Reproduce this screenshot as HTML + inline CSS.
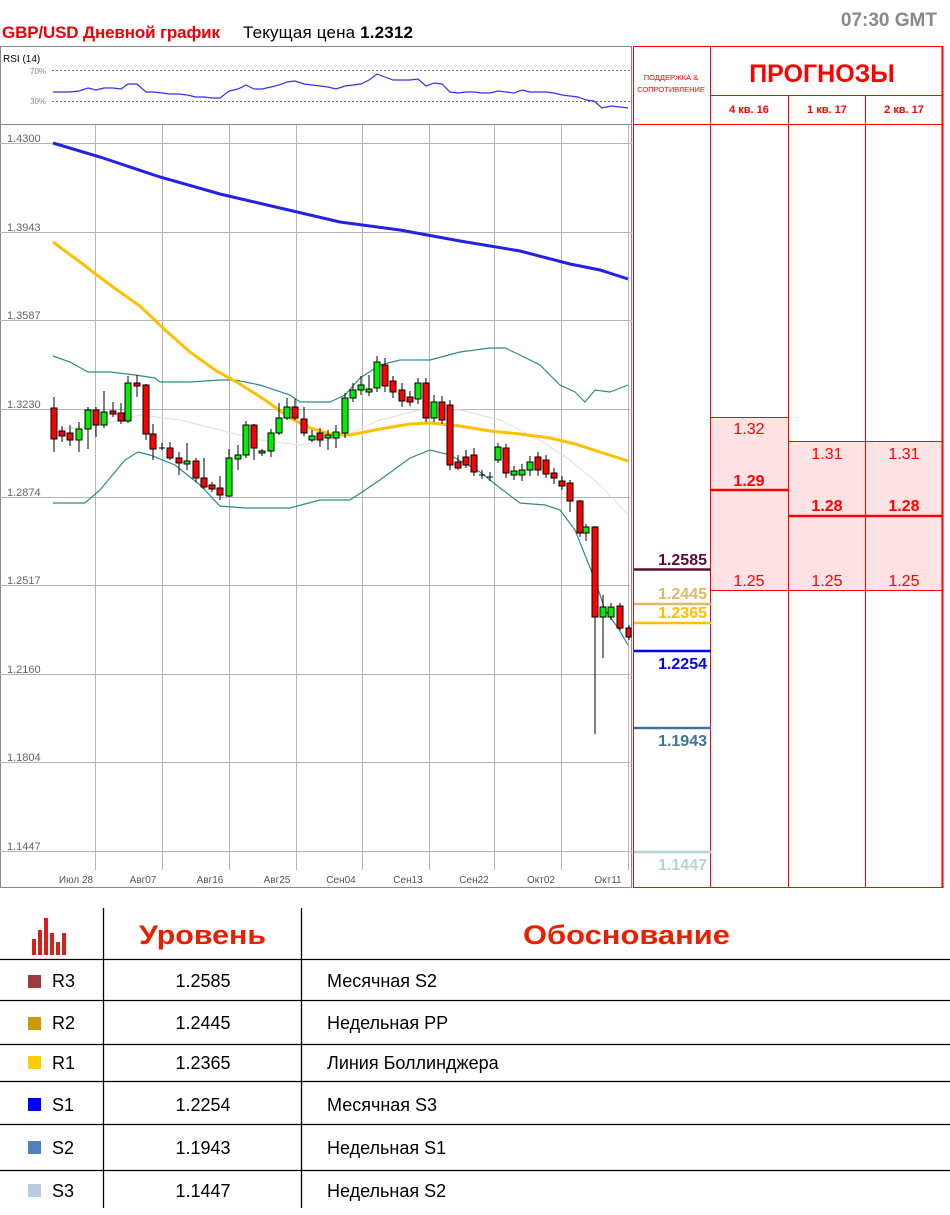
<!DOCTYPE html>
<html><head><meta charset="utf-8"><style>
html,body{margin:0;padding:0;background:#fff;width:950px;height:1215px;overflow:hidden}
svg{display:block}
text{font-family:"Liberation Sans","DejaVu Sans",sans-serif}
</style></head><body>
<svg width="950" height="1215" viewBox="0 0 950 1215" xmlns="http://www.w3.org/2000/svg">
<!-- header -->
<text x="2" y="38" font-size="17" font-weight="bold" fill="#e8000b" textLength="218">GBP/USD Дневной график</text>
<text x="243" y="38" font-size="17" fill="#000" textLength="170">Текущая цена <tspan font-weight="bold">1.2312</tspan></text>
<text x="937" y="26" font-size="19" font-weight="bold" fill="#8a8a8a" text-anchor="end">07:30 GMT</text>

<!-- chart frame -->
<rect x="0.5" y="46.5" width="631" height="841" fill="none" stroke="#888" stroke-width="1"/>
<line x1="0" y1="124.5" x2="632" y2="124.5" stroke="#888"/>
<!-- RSI -->
<text x="3" y="62" font-size="10" fill="#000">RSI (14)</text>
<text x="30" y="74" font-size="8" fill="#888">70%</text>
<text x="30" y="104" font-size="8" fill="#888">30%</text>
<line x1="52" y1="70.5" x2="630" y2="70.5" stroke="#777" stroke-dasharray="2,2"/>
<line x1="52" y1="101.5" x2="630" y2="101.5" stroke="#777" stroke-dasharray="2,2"/>
<polyline fill="none" stroke="#3333ee" stroke-width="1.2" points="53,92 62,92 70,92 79,91 88,88 96,90 104,88 113,88 121,89 128,84 137,84 146,92 153,92 162,93 170,94 179,94 187,95 196,97 204,97 212,98 220,98 229,91 238,89 246,85 254,89 262,89 271,87 279,85 287,82 295,81 304,84 312,85 320,86 328,87 336,89 345,86 353,85 361,84 369,80 377,74 385,77 393,80 402,80 410,80 418,79 426,86 434,83 442,84 450,92 458,93 466,92 474,92 482,93 490,93 498,91 506,92 514,93 522,90 530,92 538,92 546,92 554,93 562,95 570,96 578,97 586,100 594,101 602,108 611,106 620,107 628,108"/>

<!-- grid -->
<g stroke="#b5b5b5" stroke-width="1">
<line x1="0" y1="143.5" x2="632" y2="143.5"/>
<line x1="0" y1="232.5" x2="632" y2="232.5"/>
<line x1="0" y1="320.5" x2="632" y2="320.5"/>
<line x1="0" y1="409.5" x2="632" y2="409.5"/>
<line x1="0" y1="497.5" x2="632" y2="497.5"/>
<line x1="0" y1="585.5" x2="632" y2="585.5"/>
<line x1="0" y1="674.5" x2="632" y2="674.5"/>
<line x1="0" y1="762.5" x2="632" y2="762.5"/>
<line x1="0" y1="851.5" x2="632" y2="851.5"/>
<line x1="95.5" y1="125" x2="95.5" y2="870"/>
<line x1="162.5" y1="125" x2="162.5" y2="870"/>
<line x1="229.5" y1="125" x2="229.5" y2="870"/>
<line x1="296.5" y1="125" x2="296.5" y2="870"/>
<line x1="362.5" y1="125" x2="362.5" y2="870"/>
<line x1="429.5" y1="125" x2="429.5" y2="870"/>
<line x1="494.5" y1="125" x2="494.5" y2="870"/>
<line x1="561.5" y1="125" x2="561.5" y2="870"/>
<line x1="628.5" y1="125" x2="628.5" y2="870"/>
</g>
<g font-size="11" fill="#666">
<text x="7" y="142">1.4300</text>
<text x="7" y="231">1.3943</text>
<text x="7" y="319">1.3587</text>
<text x="7" y="408">1.3230</text>
<text x="7" y="496">1.2874</text>
<text x="7" y="584">1.2517</text>
<text x="7" y="673">1.2160</text>
<text x="7" y="761">1.1804</text>
<text x="7" y="850">1.1447</text>
</g>
<g font-size="10" fill="#555" text-anchor="middle">
<text x="76" y="883">Июл 28</text><text x="143" y="883">Авг07</text><text x="210" y="883">Авг16</text><text x="277" y="883">Авг25</text><text x="341" y="883">Сен04</text><text x="408" y="883">Сен13</text><text x="474" y="883">Сен22</text><text x="541" y="883">Окт02</text><text x="608" y="883">Окт11</text>
</g>

<!-- bollinger mid -->
<polyline fill="none" stroke="#e4e4e4" stroke-width="1.2" points="53,430 100,425 140,415 180,420 220,430 260,440 300,445 340,438 380,420 420,410 460,410 500,420 540,440 570,460 600,485 628,515"/>
<!-- bollinger upper/lower -->
<polyline fill="none" stroke="#2e8b8b" stroke-width="1.2" points="53,356 70,362 88,372 110,372 135,375 155,378 160,382 190,382 220,380 235,380 260,385 290,395 300,402 330,402 345,395 360,378 380,365 400,360 430,360 460,352 490,348 505,348 520,355 540,365 560,385 575,392 585,402 595,390 610,392 628,385"/>
<polyline fill="none" stroke="#2e8b8b" stroke-width="1.2" points="53,503 85,503 100,490 125,460 138,452 150,455 175,465 200,485 220,506 245,508 290,508 320,500 350,500 380,480 410,458 430,450 450,455 480,472 500,488 520,503 545,505 560,510 575,530 585,555 595,580 605,610 618,628 628,645"/>
<!-- MAs -->
<polyline fill="none" stroke="#2222e0" stroke-width="3" points="53,143 100,157 160,177 220,194 280,208 340,222 400,230 460,241 520,251 570,264 600,270 628,279"/>
<polyline fill="none" stroke="#ffc000" stroke-width="3" points="53,242 80,262 110,285 140,306 165,330 190,352 215,370 240,384 265,400 290,418 310,428 330,434 350,435 380,429 410,424 430,423 460,426 490,431 520,434 550,438 575,444 600,452 628,461"/>

<!-- candles -->
<g stroke="#000" stroke-width="1">
<line x1="54" y1="397" x2="54" y2="452"/><rect x="51" y="408" width="6" height="31" fill="#f00"/>
<line x1="62" y1="426" x2="62" y2="442"/><rect x="59" y="431" width="6" height="5" fill="#f00"/>
<line x1="70" y1="425" x2="70" y2="446"/><rect x="67" y="433" width="6" height="7" fill="#f00"/>
<line x1="79" y1="422" x2="79" y2="452"/><rect x="76" y="429" width="6" height="11" fill="#0e0"/>
<line x1="88" y1="407" x2="88" y2="449"/><rect x="85" y="410" width="6" height="19" fill="#0e0"/>
<line x1="96" y1="407" x2="96" y2="437"/><rect x="93" y="410" width="6" height="15" fill="#f00"/>
<line x1="104" y1="391" x2="104" y2="428"/><rect x="101" y="412" width="6" height="13" fill="#0e0"/>
<line x1="113" y1="402" x2="113" y2="417"/><rect x="110" y="411" width="6" height="3" fill="#f00"/>
<line x1="121" y1="403" x2="121" y2="424"/><rect x="118" y="413" width="6" height="8" fill="#f00"/>
<line x1="128" y1="376" x2="128" y2="423"/><rect x="125" y="383" width="6" height="38" fill="#0e0"/>
<line x1="137" y1="375" x2="137" y2="397"/><rect x="134" y="383" width="6" height="3" fill="#f00"/>
<line x1="146" y1="384" x2="146" y2="440"/><rect x="143" y="385" width="6" height="49" fill="#f00"/>
<line x1="153" y1="424" x2="153" y2="460"/><rect x="150" y="434" width="6" height="15" fill="#f00"/>
<line x1="162" y1="443" x2="162" y2="450"/><line x1="159" y1="448" x2="165" y2="448"/>
<line x1="170" y1="442" x2="170" y2="460"/><rect x="167" y="448" width="6" height="10" fill="#f00"/>
<line x1="179" y1="452" x2="179" y2="475"/><rect x="176" y="458" width="6" height="5" fill="#f00"/>
<line x1="187" y1="443" x2="187" y2="470"/><rect x="184" y="461" width="6" height="3" fill="#0e0"/>
<line x1="196" y1="458" x2="196" y2="482"/><rect x="193" y="461" width="6" height="17" fill="#f00"/>
<line x1="204" y1="458" x2="204" y2="489"/><rect x="201" y="478" width="6" height="9" fill="#f00"/>
<line x1="212" y1="482" x2="212" y2="492"/><rect x="209" y="485" width="6" height="4" fill="#f00"/>
<line x1="220" y1="476" x2="220" y2="500"/><rect x="217" y="488" width="6" height="7" fill="#f00"/>
<line x1="229" y1="449" x2="229" y2="497"/><rect x="226" y="458" width="6" height="38" fill="#0e0"/>
<line x1="238" y1="445" x2="238" y2="470"/><rect x="235" y="455" width="6" height="4" fill="#0e0"/>
<line x1="246" y1="421" x2="246" y2="458"/><rect x="243" y="425" width="6" height="30" fill="#0e0"/>
<line x1="254" y1="424" x2="254" y2="460"/><rect x="251" y="425" width="6" height="23" fill="#f00"/>
<line x1="262" y1="449" x2="262" y2="456"/><rect x="259" y="451" width="6" height="2" fill="#0e0"/>
<line x1="271" y1="429" x2="271" y2="457"/><rect x="268" y="433" width="6" height="18" fill="#0e0"/>
<line x1="279" y1="403" x2="279" y2="435"/><rect x="276" y="418" width="6" height="15" fill="#0e0"/>
<line x1="287" y1="398" x2="287" y2="420"/><rect x="284" y="407" width="6" height="11" fill="#0e0"/>
<line x1="295" y1="399" x2="295" y2="420"/><rect x="292" y="407" width="6" height="11" fill="#f00"/>
<line x1="304" y1="407" x2="304" y2="436"/><rect x="301" y="419" width="6" height="14" fill="#f00"/>
<line x1="312" y1="430" x2="312" y2="442"/><rect x="309" y="436" width="6" height="4" fill="#0e0"/>
<line x1="320" y1="428" x2="320" y2="447"/><rect x="317" y="433" width="6" height="7" fill="#f00"/>
<line x1="328" y1="430" x2="328" y2="450"/><rect x="325" y="435" width="6" height="3" fill="#0e0"/>
<line x1="336" y1="425" x2="336" y2="448"/><rect x="333" y="432" width="6" height="6" fill="#0e0"/>
<line x1="345" y1="393" x2="345" y2="438"/><rect x="342" y="398" width="6" height="35" fill="#0e0"/>
<line x1="353" y1="383" x2="353" y2="402"/><rect x="350" y="390" width="6" height="8" fill="#0e0"/>
<line x1="361" y1="376" x2="361" y2="395"/><rect x="358" y="385" width="6" height="5" fill="#0e0"/>
<line x1="369" y1="375" x2="369" y2="396"/><rect x="366" y="389" width="6" height="3" fill="#0e0"/>
<line x1="377" y1="356" x2="377" y2="392"/><rect x="374" y="362" width="6" height="26" fill="#0e0"/>
<line x1="385" y1="358" x2="385" y2="392"/><rect x="382" y="365" width="6" height="21" fill="#f00"/>
<line x1="393" y1="376" x2="393" y2="398"/><rect x="390" y="381" width="6" height="11" fill="#f00"/>
<line x1="402" y1="383" x2="402" y2="407"/><rect x="399" y="390" width="6" height="11" fill="#f00"/>
<line x1="410" y1="391" x2="410" y2="406"/><rect x="407" y="397" width="6" height="5" fill="#f00"/>
<line x1="418" y1="378" x2="418" y2="404"/><rect x="415" y="383" width="6" height="16" fill="#0e0"/>
<line x1="426" y1="378" x2="426" y2="422"/><rect x="423" y="383" width="6" height="35" fill="#f00"/>
<line x1="434" y1="395" x2="434" y2="422"/><rect x="431" y="402" width="6" height="16" fill="#0e0"/>
<line x1="442" y1="396" x2="442" y2="424"/><rect x="439" y="402" width="6" height="18" fill="#f00"/>
<line x1="450" y1="400" x2="450" y2="470"/><rect x="447" y="405" width="6" height="60" fill="#f00"/>
<line x1="458" y1="455" x2="458" y2="470"/><rect x="455" y="462" width="6" height="6" fill="#f00"/>
<line x1="466" y1="450" x2="466" y2="468"/><rect x="463" y="457" width="6" height="8" fill="#f00"/>
<line x1="474" y1="448" x2="474" y2="476"/><rect x="471" y="455" width="6" height="17" fill="#f00"/>
<line x1="482" y1="470" x2="482" y2="479"/><line x1="479" y1="475" x2="485" y2="475"/>
<line x1="490" y1="472" x2="490" y2="481"/><line x1="487" y1="477" x2="493" y2="477"/>
<line x1="498" y1="443" x2="498" y2="463"/><rect x="495" y="447" width="6" height="13" fill="#0e0"/>
<line x1="506" y1="444" x2="506" y2="478"/><rect x="503" y="448" width="6" height="25" fill="#f00"/>
<line x1="514" y1="466" x2="514" y2="480"/><rect x="511" y="471" width="6" height="4" fill="#0e0"/>
<line x1="522" y1="464" x2="522" y2="481"/><rect x="519" y="470" width="6" height="5" fill="#0e0"/>
<line x1="530" y1="456" x2="530" y2="476"/><rect x="527" y="462" width="6" height="8" fill="#0e0"/>
<line x1="538" y1="452" x2="538" y2="476"/><rect x="535" y="457" width="6" height="13" fill="#f00"/>
<line x1="546" y1="455" x2="546" y2="478"/><rect x="543" y="460" width="6" height="14" fill="#f00"/>
<line x1="554" y1="468" x2="554" y2="484"/><rect x="551" y="473" width="6" height="5" fill="#f00"/>
<line x1="562" y1="476" x2="562" y2="490"/><rect x="559" y="481" width="6" height="5" fill="#f00"/>
<line x1="570" y1="480" x2="570" y2="512"/><rect x="567" y="483" width="6" height="18" fill="#f00"/>
<line x1="580" y1="500" x2="580" y2="537"/><rect x="577" y="501" width="6" height="32" fill="#f00"/>
<line x1="586" y1="524" x2="586" y2="541"/><rect x="583" y="527" width="6" height="6" fill="#0e0"/>
<line x1="595" y1="526" x2="595" y2="734"/><rect x="592" y="527" width="6" height="90" fill="#f00"/>
<line x1="603" y1="595" x2="603" y2="658"/><rect x="600" y="607" width="6" height="10" fill="#0e0"/>
<line x1="611" y1="603" x2="611" y2="620"/><rect x="608" y="607" width="6" height="10" fill="#0e0"/>
<line x1="620" y1="603" x2="620" y2="630"/><rect x="617" y="606" width="6" height="22" fill="#f00"/>
<line x1="629" y1="625" x2="629" y2="640"/><rect x="626" y="628" width="5" height="9" fill="#f00"/>
</g>

<!-- right panel -->
<rect x="711" y="417" width="77" height="173" fill="#fde3e3"/>
<rect x="788" y="441" width="154" height="149" fill="#fde3e3"/>
<g stroke="#f00" stroke-width="1" fill="none">
<rect x="633.5" y="46.5" width="309" height="841"/>
<line x1="710.5" y1="46" x2="710.5" y2="888"/>
<line x1="788.5" y1="95" x2="788.5" y2="888"/>
<line x1="865.5" y1="95" x2="865.5" y2="888"/>
<line x1="710" y1="95.5" x2="943" y2="95.5"/>
<line x1="633" y1="124.5" x2="943" y2="124.5"/>
<line x1="710" y1="417.5" x2="788" y2="417.5"/>
<line x1="788" y1="441.5" x2="943" y2="441.5"/>
<line x1="710" y1="590.5" x2="943" y2="590.5"/>
</g>
<line x1="942.5" y1="46" x2="942.5" y2="888" stroke="#f00" stroke-width="2"/>
<line x1="711" y1="490" x2="788" y2="490" stroke="#f00" stroke-width="2.5"/>
<line x1="788" y1="516" x2="943" y2="516" stroke="#f00" stroke-width="2.5"/>
<text x="671" y="80" font-size="7.5" fill="#f00" text-anchor="middle">ПОДДЕРЖКА &amp;</text>
<text x="671" y="92" font-size="7.5" fill="#f00" text-anchor="middle">СОПРОТИВЛЕНИЕ</text>
<text x="822" y="82" font-size="25" font-weight="bold" fill="#f00" text-anchor="middle">ПРОГНОЗЫ</text>
<g font-size="11" font-weight="bold" fill="#f00" text-anchor="middle">
<text x="749" y="113">4 кв. 16</text><text x="827" y="113">1 кв. 17</text><text x="904" y="113">2 кв. 17</text>
</g>
<g font-size="16" fill="#f00" text-anchor="middle">
<text x="749" y="434">1.32</text><text x="827" y="459">1.31</text><text x="904" y="459">1.31</text>
<text x="749" y="586">1.25</text><text x="827" y="586">1.25</text><text x="904" y="586">1.25</text>
</g>
<g font-size="16" font-weight="bold" fill="#f00" text-anchor="middle">
<text x="749" y="486">1.29</text><text x="827" y="511">1.28</text><text x="904" y="511">1.28</text>
</g>
<!-- level lines -->
<line x1="634" y1="569.5" x2="711" y2="569.5" stroke="#5e0a35" stroke-width="2.5"/>
<line x1="634" y1="604" x2="711" y2="604" stroke="#d9b96b" stroke-width="2.5"/>
<line x1="634" y1="623" x2="711" y2="623" stroke="#ffc000" stroke-width="2.5"/>
<line x1="634" y1="651" x2="711" y2="651" stroke="#0000ff" stroke-width="2.5"/>
<line x1="634" y1="728" x2="711" y2="728" stroke="#3f7496" stroke-width="2.5"/>
<line x1="634" y1="852" x2="711" y2="852" stroke="#b5d5d5" stroke-width="2.5"/>
<g font-size="16" font-weight="bold" text-anchor="end">
<text x="707" y="565" fill="#5e0a35">1.2585</text>
<text x="707" y="599" fill="#d9b96b">1.2445</text>
<text x="707" y="618" fill="#ffc000">1.2365</text>
<text x="707" y="669" fill="#0000ff">1.2254</text>
<text x="707" y="746" fill="#3f7496">1.1943</text>
<text x="707" y="870" fill="#b5d5d5">1.1447</text>
</g>

<!-- bottom table -->
<g fill="#d8201a">
<rect x="32" y="939" width="4" height="16"/><rect x="38" y="930" width="4" height="25"/><rect x="44" y="918" width="4" height="37"/><rect x="50" y="933" width="4" height="22"/><rect x="56" y="942" width="4" height="13"/><rect x="62" y="933" width="4" height="22"/>
</g>
<text x="139" y="944" font-size="27" font-weight="bold" fill="#e82000" textLength="127" lengthAdjust="spacingAndGlyphs">Уровень</text>
<text x="523" y="944" font-size="27" font-weight="bold" fill="#e82000" textLength="207" lengthAdjust="spacingAndGlyphs">Обоснование</text>
<g stroke="#000" stroke-width="1.3">
<line x1="103.5" y1="908" x2="103.5" y2="1208"/>
<line x1="301.5" y1="908" x2="301.5" y2="1208"/>
<line x1="0" y1="959.5" x2="950" y2="959.5"/>
<line x1="0" y1="1000.5" x2="950" y2="1000.5"/>
<line x1="0" y1="1044.5" x2="950" y2="1044.5"/>
<line x1="0" y1="1081.5" x2="950" y2="1081.5"/>
<line x1="0" y1="1124.5" x2="950" y2="1124.5"/>
<line x1="0" y1="1170.5" x2="950" y2="1170.5"/>
</g>
<rect x="28" y="975" width="13" height="13" fill="#9b3c3c"/>
<rect x="28" y="1017" width="13" height="13" fill="#cc9900"/>
<rect x="28" y="1056" width="13" height="13" fill="#ffcc00"/>
<rect x="28" y="1098" width="13" height="13" fill="#0000ff"/>
<rect x="28" y="1141" width="13" height="13" fill="#4f81bd"/>
<rect x="28" y="1184" width="13" height="13" fill="#b8cce4"/>
<g font-size="18" fill="#000">
<text x="52" y="987">R3</text><text x="52" y="1029">R2</text><text x="52" y="1069">R1</text><text x="52" y="1111">S1</text><text x="52" y="1154">S2</text><text x="52" y="1197">S3</text>
</g>
<g font-size="18" fill="#000" text-anchor="middle">
<text x="203" y="987">1.2585</text><text x="203" y="1029">1.2445</text><text x="203" y="1069">1.2365</text><text x="203" y="1111">1.2254</text><text x="203" y="1154">1.1943</text><text x="203" y="1197">1.1447</text>
</g>
<g font-size="18" fill="#000">
<text x="327" y="987">Месячная S2</text><text x="327" y="1029">Недельная PP</text><text x="327" y="1069">Линия Боллинджера</text><text x="327" y="1111">Месячная S3</text><text x="327" y="1154">Недельная S1</text><text x="327" y="1197">Недельная S2</text>
</g>
</svg>
</body></html>
